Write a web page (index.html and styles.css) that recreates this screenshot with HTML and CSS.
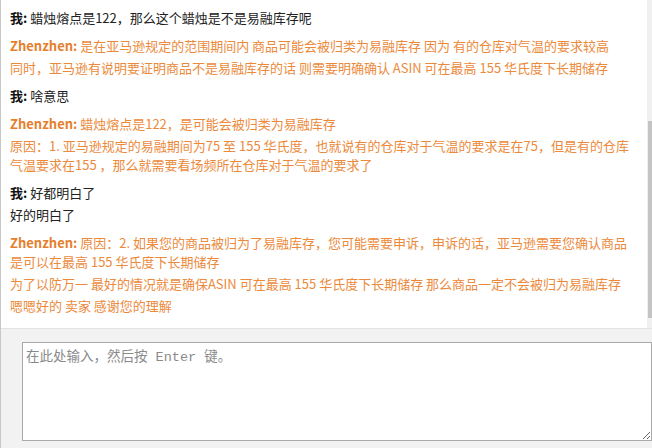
FILE: index.html
```html
<!DOCTYPE html>
<html lang="zh-CN">
<head>
<meta charset="UTF-8" /><meta name="viewport"
content="width=device-width, initial-scale=1.0" />
<title>Chat</title>
<link rel="stylesheet" href="styles.css">
</head>
<body>
<div class="chat">
<div class="log">
<div class="msg me">
<p><b>我:</b> 蜡烛熔点是122，那么这个蜡烛是不是易融库存呢</p>
</div>
<div class="msg bot">
<p><b>Zhenzhen:</b> 是在亚马逊规定的范围期间内 商品可能会被归类为易融库存 因为 有的仓库对气温的要求较高</p>
<p>同时，亚马逊有说明要证明商品不是易融库存的话 则需要明确确认 ASIN 可在最高 155 华氏度下长期储存</p>
</div>
<div class="msg me">
<p><b>我:</b> 啥意思</p>
</div>
<div class="msg bot">
<p><b>Zhenzhen:</b> 蜡烛熔点是122，是可能会被归类为易融库存</p>
<p>原因：1. 亚马逊规定的易融期间为75 至 155 华氏度，也就说有的仓库对于气温的要求是在75，但是有的仓库气温要求在155 ，那么就需要看场频所在仓库对于气温的要求了</p>
</div>
<div class="msg me">
<p><b>我:</b> 好都明白了</p>
<p>好的明白了</p>
</div>
<div class="msg bot">
<p><b>Zhenzhen:</b> 原因：2. 如果您的商品被归为了易融库存，您可能需要申诉，申诉的话，亚马逊需要您确认商品是可以在最高 155 华氏度下长期储存</p>
<p>为了以防万一 最好的情况就是确保ASIN 可在最高 155 华氏度下长期储存 那么商品一定不会被归为易融库存</p>
<p>嗯嗯好的 卖家 感谢您的理解</p>
</div>
</div>
<div class="scroll"><div class="thumb"></div></div>
</div>
<div class="input">
<textarea placeholder="在此处输入，然后按 Enter 键。"></textarea>
</div>
</body>
</html>
```
FILE: styles.css
```css
body { margin: 0; font-family: "Noto Sans CJK SC", sans-serif; font-size: 13px;
border-left: 1px solid #c8c8c8; height: 448px; box-sizing: border-box; }
.chat { display: flex; height: 328px; background: #fff; }
.log { flex: 1; overflow: hidden; padding: 8px 9px 0 9px; }
.msg + .msg { margin-top: 9px; }
.msg p { margin: 0; line-height: 19px; }
.msg p + p { margin-top: 3px; }
.me { color: #222; }
.me b { color: #111; }
.bot { color: #ec8a3c; }
.bot b { color: #e57f2d; }
.scroll { width: 5px; background: #f0f0f0; padding-top: 121px; box-sizing: border-box; }
.thumb { height: 197px; margin-left: 1px; background: #c4c4c4; }
.input { height: 120px; background: #f2f2f2; border-top: 1px solid #e2e2e2;
box-sizing: border-box; padding: 13px 0 0 21px; }
textarea { display: block; width: 630px; height: 99px; box-sizing: border-box;
margin: 0; border: 1px solid #a9a9a9; padding: 2px 3px; resize: both;
font-family: "Liberation Mono", "Noto Sans CJK SC", monospace; font-size: 13.5px; }
textarea::placeholder { color: #8a8a8a; }
```
